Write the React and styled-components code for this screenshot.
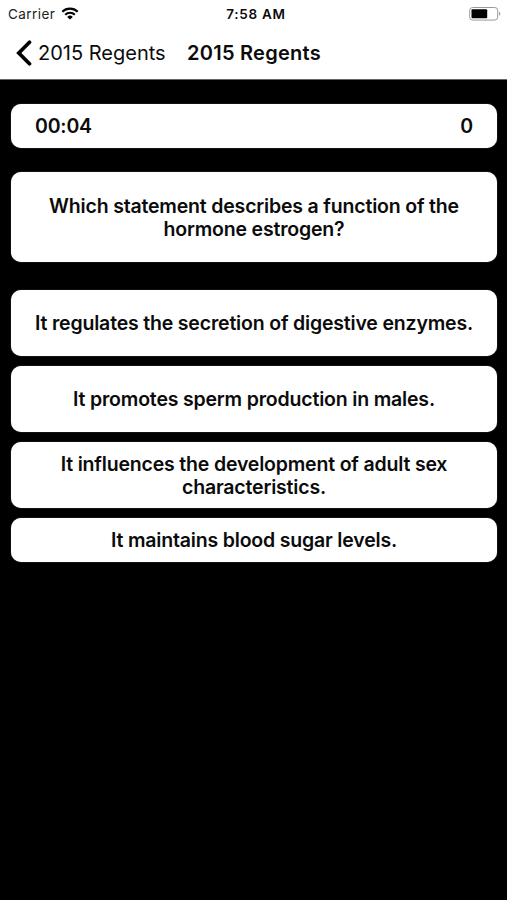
import styled, { createGlobalStyle } from "styled-components";

const GlobalStyle = createGlobalStyle`
  * {
    box-sizing: border-box;
  }

  body {
    margin: 0;
    background-color: #000;
    font-family: Inter, "Liberation Sans", sans-serif;
    color: #0b0b0b;
  }
`;

const Screen = styled.div`
  min-height: 900px;
  background-color: #000;
`;

const Header = styled.header`
  height: 80px;
  border-bottom: 1px solid #666;
  background-color: #fff;
`;

const StatusBar = styled.div`
  display: grid;
  grid-template-columns: 1fr auto 1fr;
  align-items: center;
  height: 27px;
  padding: 0 6px 0 8px;
  font-size: 13.5px;
  line-height: 16px;
`;

const Carrier = styled.div`
  display: flex;
  align-items: center;
  gap: 6px;
  color: #222;
  letter-spacing: 0.45px;
`;

const Clock = styled.div`
  padding-left: 3px;
  font-weight: 600;
  letter-spacing: 0.7px;
`;

const Battery = styled.svg`
  justify-self: end;
`;

const NavBar = styled.nav`
  display: flex;
  align-items: center;
  height: 52px;
  padding: 0 0 1px 16px;
  font-size: 20px;
  line-height: 24px;
`;

const BackButton = styled.button`
  display: flex;
  align-items: center;
  gap: 6px;
  width: 171px;
  padding: 0;
  border: none;
  background: none;
  color: inherit;
  font: inherit;
  white-space: nowrap;
  cursor: pointer;
`;

const Title = styled.h1`
  margin: 0;
  font-size: 20px;
  font-weight: 600;
  letter-spacing: 0.26px;
  white-space: nowrap;
`;

const Quiz = styled.main`
  padding: 24px 10px 0 11px;
  font-size: 19.5px;
  font-weight: 600;
  line-height: 23px;
  letter-spacing: -0.18px;
`;

const Card = styled.div`
  display: flex;
  align-items: center;
  justify-content: center;
  width: 100%;
  padding: 0 24px;
  border-radius: 10px;
  background-color: #fff;
  box-shadow: 0 0 1px #aaa;
  text-align: center;
`;

const ScoreCard = styled(Card)`
  justify-content: space-between;
  height: 44px;
`;

const QuestionCard = styled(Card)`
  height: 90px;
  margin-top: 24px;
  padding-top: 2px;
`;

const Answers = styled.div`
  display: flex;
  flex-direction: column;
  gap: 10px;
  margin-top: 28px;
`;

const Answer = styled(Card).attrs({ as: "button" })`
  height: ${(props) => props.$height}px;
  padding: ${(props) => (props.$multiline ? "2px 20px 0" : "0 20px")};
  border: none;
  color: inherit;
  font: inherit;
  letter-spacing: inherit;
  cursor: pointer;
`;

const answers = [
  { text: "It regulates the secretion of digestive enzymes.", height: 66 },
  { text: "It promotes sperm production in males.", height: 66 },
  {
    text: "It influences the development of adult sex characteristics.",
    height: 66,
    multiline: true,
  },
  { text: "It maintains blood sugar levels.", height: 44 },
];

const WifiIcon = () => (
  <svg width="18" height="13" viewBox="0 0 18 13" fill="none">
    <path d="M1.3 4.7a11 11 0 0 1 15.4 0" stroke="#000" strokeWidth="2.2" />
    <path d="M4.2 7.7a6.9 6.9 0 0 1 9.6 0" stroke="#000" strokeWidth="2.1" />
    <path d="M6.2 9.9a4.1 4.1 0 0 1 5.6 0L9 12.6z" fill="#000" />
  </svg>
);

const BackIcon = () => (
  <svg width="16" height="26" viewBox="0 0 16 26" fill="none">
    <path
      d="M13.5 2.2 2.8 13l10.7 10.8"
      stroke="#000"
      strokeWidth="3.7"
      strokeLinecap="round"
    />
  </svg>
);

const BatteryIcon = () => (
  <Battery width="32" height="14" viewBox="0 0 32 14" fill="none">
    <rect x="0.7" y="0.5" width="28" height="12.6" rx="3" stroke="#999" />
    <rect x="2.5" y="2.3" width="15.7" height="9" rx="1" fill="#000" />
    <path d="M30.3 4.8v4c1.3-.5 1.3-3.500 0-4z" fill="#777" />
  </Battery>
);

const App = () => {
  return (
    <Screen>
      <GlobalStyle />
      <Header>
        <StatusBar>
          <Carrier>
            Carrier <WifiIcon />
          </Carrier>
          <Clock>7:58 AM</Clock>
          <BatteryIcon />
        </StatusBar>
        <NavBar>
          <BackButton>
            <BackIcon />
            2015 Regents
          </BackButton>
          <Title>2015 Regents</Title>
        </NavBar>
      </Header>
      <Quiz>
        <ScoreCard>
          <span>00:04</span>
          <span>0</span>
        </ScoreCard>
        <QuestionCard>
          Which statement describes a function of the hormone estrogen?
        </QuestionCard>
        <Answers>
          {answers.map((answer) => (
            <Answer
              key={answer.text}
              $height={answer.height}
              $multiline={answer.multiline}
            >
              {answer.text}
            </Answer>
          ))}
        </Answers>
      </Quiz>
    </Screen>
  );
};

export default App;
